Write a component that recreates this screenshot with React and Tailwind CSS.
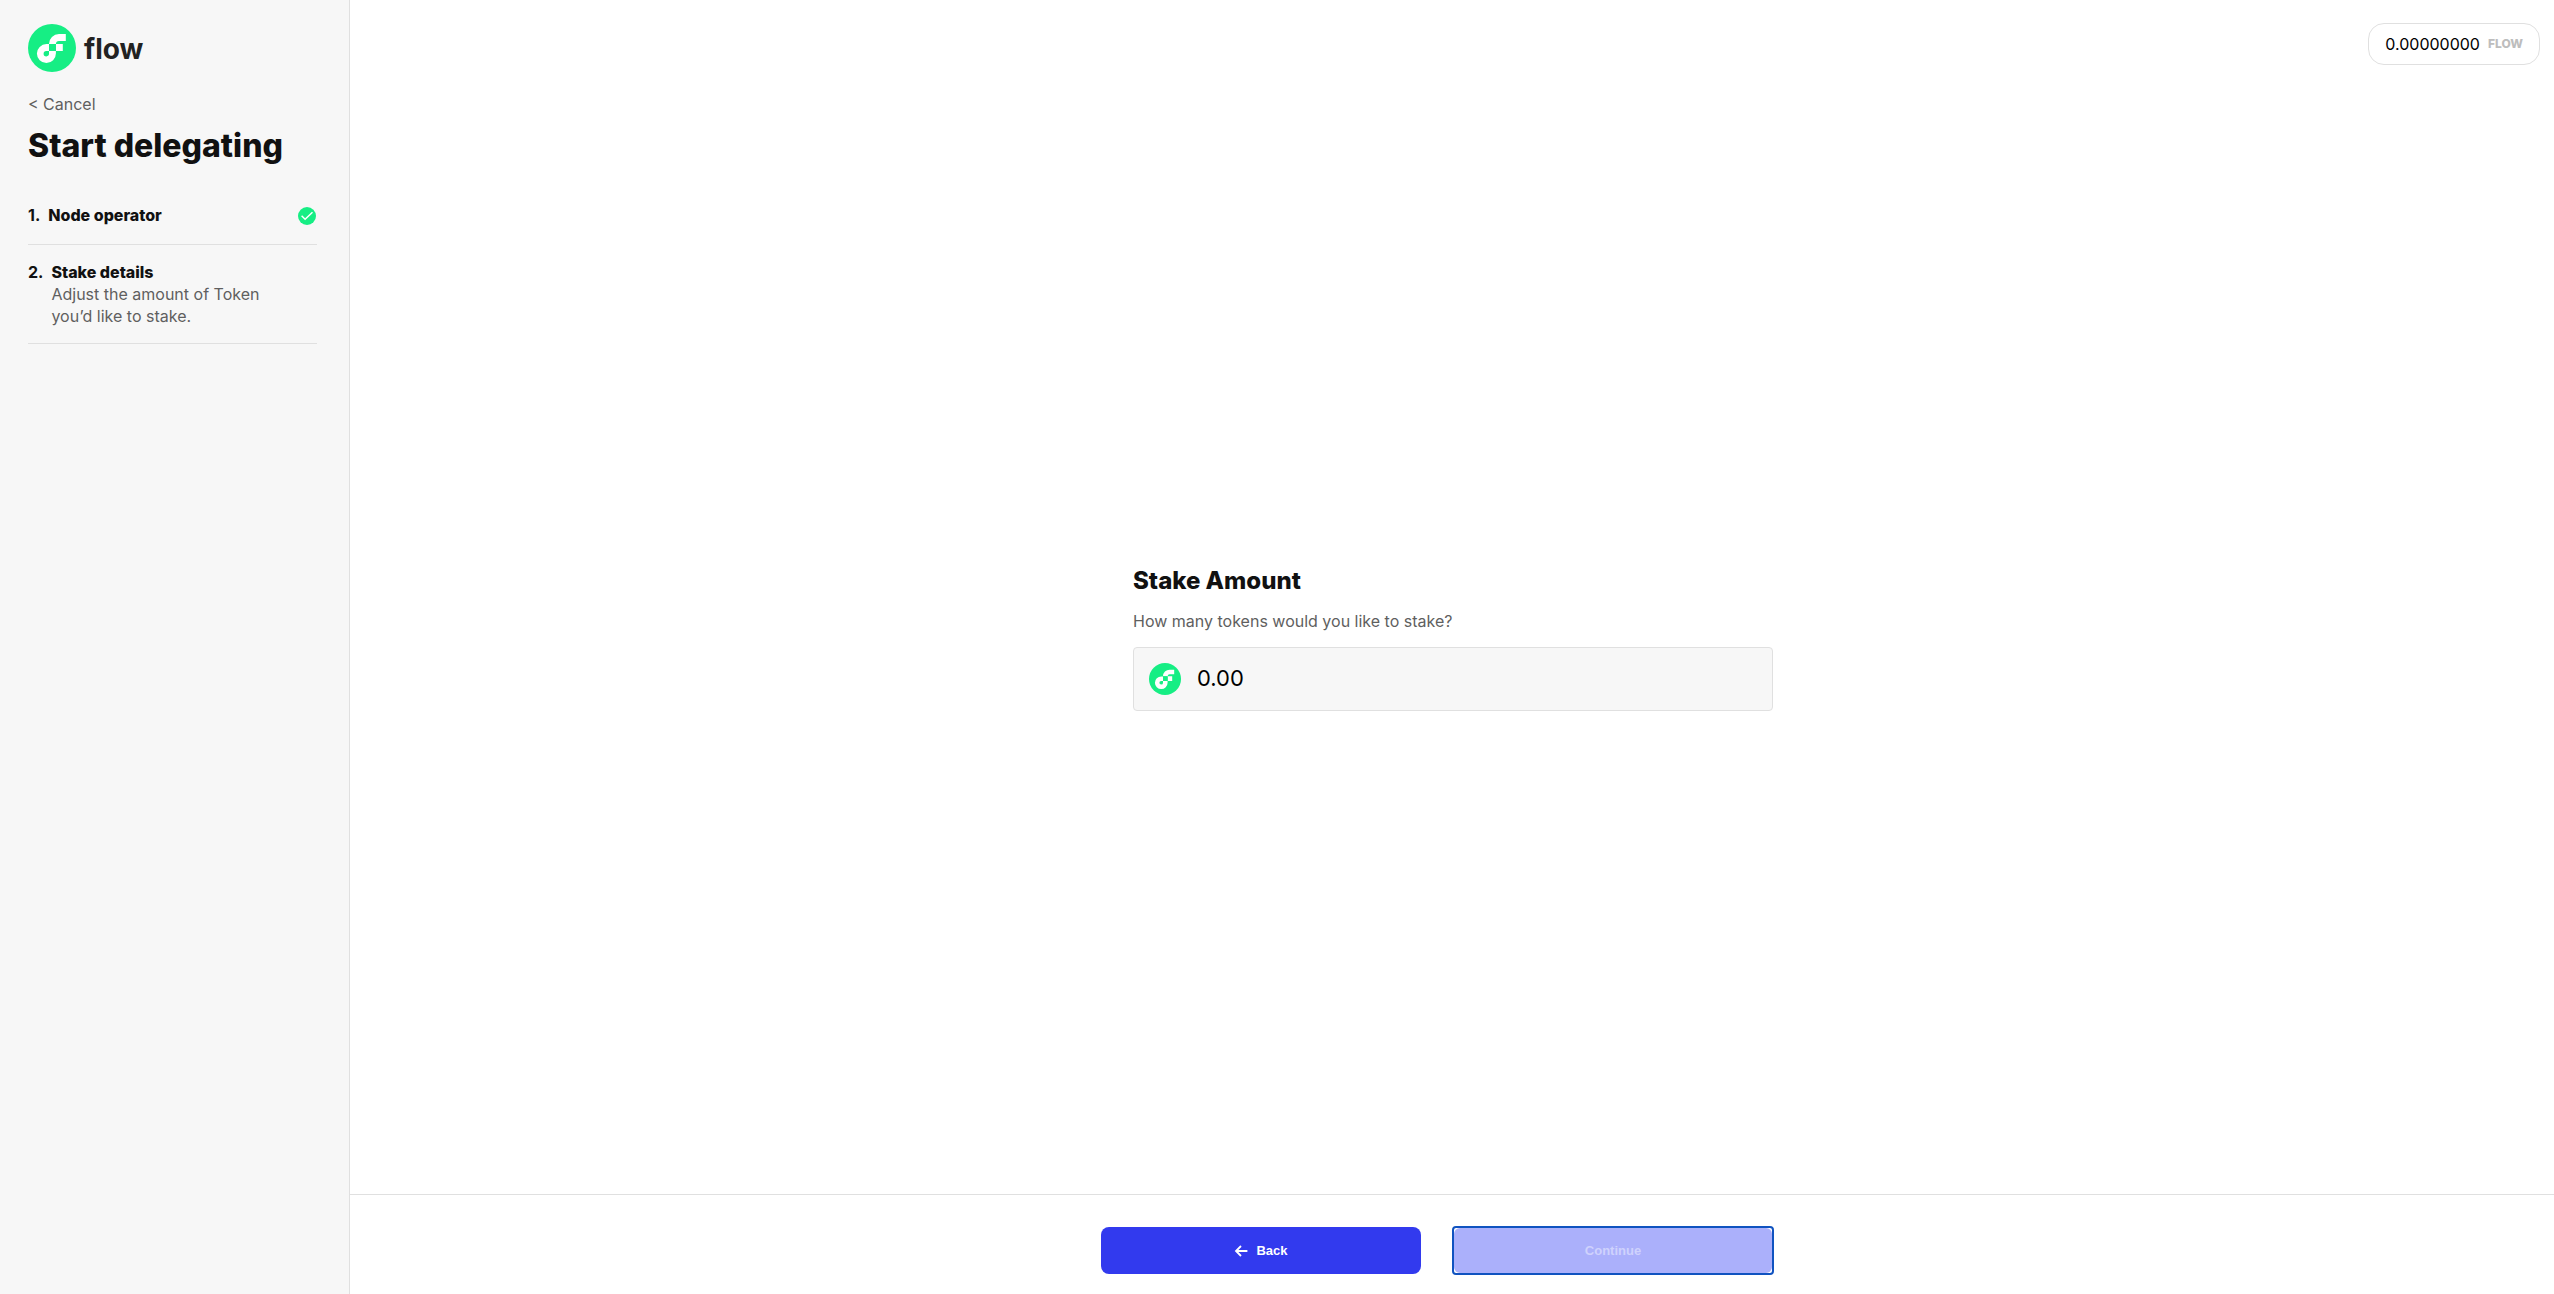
const steps = [
  { id: 1, title: "Node operator", done: true },
  { id: 2, title: "Stake details", text: "Adjust the amount of Token you’d like to stake." },
];

function FlowMark({ className }) {
  return (
    <svg viewBox="0 0 48 48" className={className} aria-hidden="true">
      <circle cx="24" cy="24" r="24" fill="#16ee84" />
      <path
        fill="#fff"
        d="M21 20A10 10 0 0 1 31 10H37.8V17H31A3.1 3.1 0 0 0 27.9 20H34.8V27H27.9V29.6A9.5 9.5 0 1 1 18.4 20.1H21V27H18.4A2.7 2.7 0 1 0 21 29.6V27H27.9V20Z"
      />
      <path fill="#16ee84" d="M21 20H27.9V27H21Z" />
    </svg>
  );
}

function DoneIcon() {
  return (
    <svg viewBox="0 0 18 18" className="h-[18px] w-[18px]" role="img" aria-label="Completed">
      <circle cx="9" cy="9" r="9" fill="#16ee84" />
      <path d="M3.6 8.8L7.1 12.2L14.5 5.2" fill="none" stroke="#fff" strokeWidth="1.5" />
    </svg>
  );
}

function BackArrow() {
  return (
    <svg viewBox="0 0 14 12" className="h-3 w-3.5" fill="none" stroke="currentColor" strokeWidth="1.8" aria-hidden="true">
      <path d="M13.4 6H2M7 1L2 6L7 11" />
    </svg>
  );
}

function Step({ step }) {
  return (
    <li className="flex border-b border-[#e0e0e0] py-4 text-base leading-[22px]">
      <span className="mr-2 font-bold">{step.id}.</span>
      <div className="flex-1 pr-8">
        <h2 className="font-extrabold">{step.title}</h2>
        {step.text && <p className="text-[#5f5f5f]">{step.text}</p>}
      </div>
      {step.done && (
        <span className="mr-px flex h-6 items-center">
          <DoneIcon />
        </span>
      )}
    </li>
  );
}

function Sidebar() {
  return (
    <aside className="w-[350px] shrink-0 border-r border-[#e0e0e0] bg-[#f7f7f7] px-7 pt-6">
      <a href="#home" className="flex items-center gap-2">
        <FlowMark className="h-12 w-12" />
        <span className="pt-0.5 text-[28px] leading-8 font-bold text-[#222]">flow</span>
      </a>
      <a href="#cancel" className="mt-5 block text-base leading-6 text-[#5f5f5f]">
        &lt; Cancel
      </a>
      <h1 className="mt-2.5 text-[32px] leading-10 font-extrabold">Start delegating</h1>
      <ol className="mt-[22px] pr-1">
        {steps.map((step) => (
          <Step key={step.id} step={step} />
        ))}
      </ol>
    </aside>
  );
}

export default function App() {
  return (
    <div className="flex min-h-screen bg-white font-['Inter','Liberation_Sans',sans-serif] text-[#111]">
      <Sidebar />
      <div className="flex min-w-0 flex-1 flex-col">
        <header className="flex justify-end pt-[23px] pr-3.5">
          <div className="flex h-[42px] items-center gap-2 rounded-2xl border border-[#e0e0e0] px-4">
            <span className="text-base text-black">0.00000000</span>
            <span className="text-xs font-extrabold text-[#bdbdbd]">FLOW</span>
          </div>
        </header>

        <main className="flex flex-1 items-center justify-center pt-4 pl-0.5">
          <div className="w-[640px]">
            <h2 className="text-2xl leading-8 font-extrabold">Stake Amount</h2>
            <label htmlFor="amount" className="mt-3 block text-base leading-6 text-[#5f5f5f]">
              How many tokens would you like to stake?
            </label>
            <div className="mt-3.5 flex h-16 items-center gap-4 rounded border border-[#e0e0e0] bg-[#f7f7f7] px-[15px]">
              <FlowMark className="h-8 w-8" />
              <input id="amount" type="text" defaultValue="0.00" className="min-w-0 flex-1 bg-transparent text-[22px] text-black outline-none" />
            </div>
          </div>
        </main>

        <footer className="flex items-center justify-center border-t border-[#e0e0e0] pt-[31px] pr-[29px] pb-[19px] font-['Liberation_Sans',sans-serif] text-[13px] font-bold">
          <button type="button" className="mr-[31px] flex h-[47px] w-80 items-center justify-center gap-2 rounded-lg bg-[#323aee] text-white">
            <BackArrow />
            Back
          </button>
          <div className="h-[49px] w-[322px] rounded border-2 border-[#1053c0]">
            <button type="button" disabled className="h-full w-full rounded-md bg-[#abb0fb] text-[#cfd2fd]">
              Continue
            </button>
          </div>
        </footer>
      </div>
    </div>
  );
}
